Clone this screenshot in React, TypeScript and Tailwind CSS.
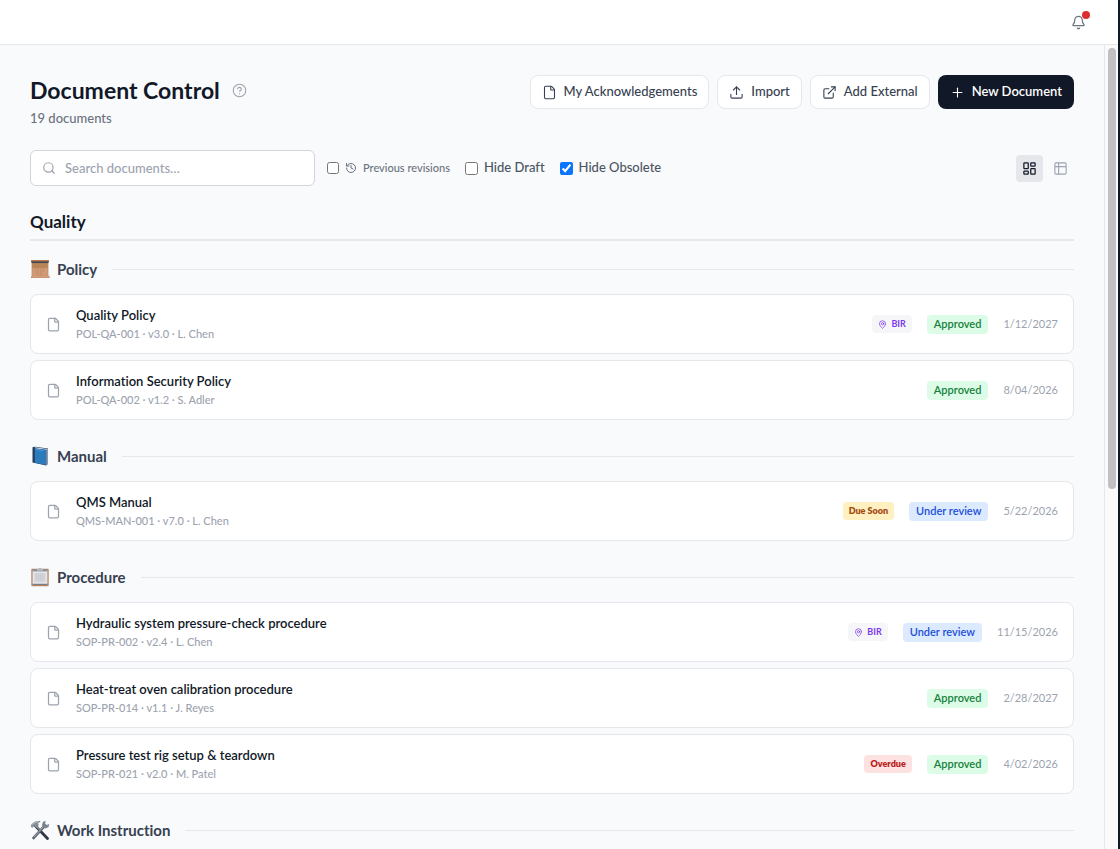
import React, { useState } from 'react';
import {
  Bell,
  CircleHelp,
  ExternalLink,
  File,
  History,
  LayoutDashboard,
  MapPin,
  Plus,
  Search,
  Table2,
  Upload,
} from 'lucide-react';
import clsx from 'clsx';

type Status = 'Approved' | 'Under review';

interface Doc {
  code: string;
  title: string;
  version: string;
  owner: string;
  status: Status;
  date: string;
  site?: string;
  due?: 'Due Soon' | 'Overdue';
}

interface Group {
  name: string;
  icon: React.ReactNode;
  docs: Doc[];
}

const ScrollIcon = () => (
  <svg viewBox="0 0 20 20" className="w-5 h-5" aria-hidden="true">
    <path d="M2 3h16v15H2z" fill="#d19a75" />
    <path d="M2 4h16v5H2z" fill="#b98558" />
    <path d="M1 1h18v2.4H1z" fill="#b97a4c" />
    <path d="M1.500 2.400h17v1.700H1.500z" fill="#3f4756" />
    <path d="M2 4v14M18 4v13" stroke="#c08a66" strokeWidth="0.8" />
    <path d="M5 10h9M5 12h10M5 14h7M7 16h6" stroke="#b57f5c" strokeWidth="0.7" strokeDasharray="1.500 1" />
    <path d="M1 17.500h17.500l1-1.500v3H1z" fill="#c48560" />
    <path d="M2 18h16" stroke="#e0b597" strokeWidth="0.7" />
  </svg>
);

const BookIcon = () => (
  <svg viewBox="0 0 20 20" className="w-5 h-5" aria-hidden="true">
    <path d="M2.500 1.200 5 .8 18 2.600v15.200l-1.800 1.600L2.500 16.500z" fill="#263d5c" />
    <path d="M5 1.300 17.500 3v1L5 2.500z" fill="#c9d9ea" />
    <path d="M4.800 2.300 16.300 4v15L4.800 16.700z" fill="#2b7bbd" />
    <path d="M16.300 4 18 2.800v15l-1.700 1.500z" fill="#8d9bab" />
    <path d="M6 3.400 13 4.400" stroke="#5a9dd6" strokeWidth="1" />
  </svg>
);

const ClipboardIcon = () => (
  <svg viewBox="0 0 20 20" className="w-5 h-5" aria-hidden="true">
    <rect x="1.300" y="1.800" width="17.400" height="17.400" rx="1" fill="#b98663" />
    <path d="M2.600 3.200h14.800v14.600H2.600z" fill="#e4e6ea" />
    <path d="M2.600 2.400h14.800v2H2.600z" fill="#8a909b" />
    <path d="M7 1.800h1.500a1.600 1.600 0 0 1 3 0H13v2H7z" fill="#b5bac2" />
    <rect x="4.500" y="6" width="11" height="9" rx="1" fill="#d0d3d9" />
    <path d="M6 8h8M6 10h8M6 12h8" stroke="#bfc3ca" strokeWidth="0.800" strokeDasharray="1 1" />
    <path d="M2.600 16.800h14.800v1H2.600z" fill="#5f6878" />
  </svg>
);

const ToolsIcon = () => (
  <svg viewBox="0 0 20 20" className="w-5 h-5" aria-hidden="true">
    <path d="M5.500 6 17.500 18.500" stroke="#303744" strokeWidth="2.800" strokeLinecap="round" />
    <path d="M6.500 6.500 10 10" stroke="#8b919b" strokeWidth="1.600" />
    <path d="M.8 6.800 1.500 4 5 1.400 9.500.8 10.500 2 8 3l.8 2.200L6 8 4.300 5.800 2.500 7.800z" fill="#858c97" />
    <path d="M2 4.500 5.500 2.200 8.500 1.700" stroke="#c6cad0" strokeWidth="0.8" fill="none" />
    <path d="M14 6.500 3.500 18" stroke="#5d6572" strokeWidth="2.600" strokeLinecap="round" />
    <path d="M13.500 6.500 4 17" stroke="#b3b8c0" strokeWidth="0.900" />
    <path d="M12 4.800 13 1.700 15.800.8 15 3.300l1.700 1.700 2.600-.9-.8 3-3 1.300-2.700-.8z" fill="#7c8490" />
  </svg>
);

const groups: Group[] = [
  {
    name: 'Policy',
    icon: <ScrollIcon />,
    docs: [
      { code: 'POL-QA-001', title: 'Quality Policy', version: 'v3.0', owner: 'L. Chen', status: 'Approved', date: '1/12/2027', site: 'BIR' },
      { code: 'POL-QA-002', title: 'Information Security Policy', version: 'v1.2', owner: 'S. Adler', status: 'Approved', date: '8/04/2026' },
    ],
  },
  {
    name: 'Manual',
    icon: <BookIcon />,
    docs: [
      { code: 'QMS-MAN-001', title: 'QMS Manual', version: 'v7.0', owner: 'L. Chen', status: 'Under review', date: '5/22/2026', due: 'Due Soon' },
    ],
  },
  {
    name: 'Procedure',
    icon: <ClipboardIcon />,
    docs: [
      { code: 'SOP-PR-002', title: 'Hydraulic system pressure-check procedure', version: 'v2.4', owner: 'L. Chen', status: 'Under review', date: '11/15/2026', site: 'BIR' },
      { code: 'SOP-PR-014', title: 'Heat-treat oven calibration procedure', version: 'v1.1', owner: 'J. Reyes', status: 'Approved', date: '2/28/2027' },
      { code: 'SOP-PR-021', title: 'Pressure test rig setup & teardown', version: 'v2.0', owner: 'M. Patel', status: 'Approved', date: '4/02/2026', due: 'Overdue' },
    ],
  },
  { name: 'Work Instruction', icon: <ToolsIcon />, docs: [] },
];

const statusStyles: Record<Status, string> = {
  Approved: 'bg-[#dcfce7] text-[#15803d]',
  'Under review': 'bg-[#dbeafe] text-[#1d4ed8]',
};

const dueStyles = {
  'Due Soon': 'bg-[#fef0c0] text-[#a34a12]',
  Overdue: 'bg-[#fee2e2] text-[#b91c1c]',
};

const DocumentCard: React.FC<{ doc: Doc }> = ({ doc }) => (
  <li className="flex items-center h-[60px] px-[15px] bg-white border border-[#e5e7eb] rounded-lg">
    <File className="w-[15px] h-[15px] shrink-0 text-[#9ca3af]" strokeWidth={2} />
    <div className="ml-[15px] flex-1 min-w-0">
      <h4 className="text-[13px] leading-5 font-semibold text-[#111827] truncate">{doc.title}</h4>
      <p className="text-[11px] leading-[18px] font-medium text-[#9ca3af] truncate">
        {doc.code} · {doc.version} · {doc.owner}
      </p>
    </div>
    <div className="flex items-center gap-[15px] shrink-0">
      {doc.site && (
        <span className="flex items-center gap-1 h-[18px] px-[6px] rounded bg-[#f6f6f9] text-[9px] font-bold text-[#7c3aed]">
          <MapPin className="w-[9px] h-[9px]" strokeWidth={2} />
          {doc.site}
        </span>
      )}
      {doc.due && (
        <span className={clsx('flex items-center h-[18px] px-[6px] rounded text-[9px] font-extrabold', dueStyles[doc.due])}>
          {doc.due}
        </span>
      )}
      <span className={clsx('flex items-center h-[19px] px-[7px] rounded text-[11px] font-semibold', statusStyles[doc.status])}>
        {doc.status}
      </span>
      <time className="text-[11px] text-[#9ca3af]">{doc.date}</time>
    </div>
  </li>
);

const GroupSection: React.FC<{ group: Group }> = ({ group }) => (
  <section>
    <div className="flex items-center h-6 mb-[13px]">
      {group.icon}
      <h3 className="ml-[7px] mr-[15px] text-[15px] leading-6 font-bold text-[#374151]">{group.name}</h3>
      <div className="flex-1 h-px bg-[#e5e7eb]" />
    </div>
    <ul className="space-y-[6px]">
      {group.docs.map((doc) => (
        <DocumentCard key={doc.code} doc={doc} />
      ))}
    </ul>
  </section>
);

const outlineButton =
  'flex items-center gap-[7px] h-[34px] px-[11px] bg-white border border-[#e5e7eb] rounded-lg text-[13px] font-medium text-[#374151] hover:bg-gray-50';

export default function App() {
  const [hideDraft, setHideDraft] = useState(false);
  const [hideObsolete, setHideObsolete] = useState(true);
  const [previous, setPrevious] = useState(false);
  const [view, setView] = useState<'cards' | 'table'>('cards');

  return (
    <div className="h-screen flex bg-[#f9fafb] font-['Lato',sans-serif] [font-variant-ligatures:none] text-[#111827]">
      <div className="flex-1 min-w-0 flex flex-col">
        {/* Top bar */}
        <header className="h-[45px] shrink-0 flex items-center justify-end pr-[32px] bg-white border-b border-[#e5e7eb]">
          <button className="relative" aria-label="Notifications">
            <Bell className="w-[15px] h-[15px] text-[#6b7280]" strokeWidth={2} />
            <span className="absolute -top-[4px] -right-[4px] w-[8px] h-[8px] rounded-full bg-[#dc2f2f]" />
          </button>
        </header>

        <div className="flex-1 min-h-0 flex">
          <main className="flex-1 min-w-0 overflow-hidden px-[30px] pt-[30px]">
            {/* Page title and actions */}
            <div className="flex items-start justify-between">
              <div>
                <div className="flex items-center gap-3 h-[30px]">
                  <h1 className="text-[23px] leading-[30px] font-bold">Document Control</h1>
                  <button aria-label="Help">
                    <CircleHelp className="w-[15px] h-[15px] text-[#9ca3af]" strokeWidth={1.75} />
                  </button>
                </div>
                <p className="mt-[3px] text-[13px] leading-5 font-medium text-[#6b7280]">19 documents</p>
              </div>
              <div className="flex items-center gap-2">
                <button className={outlineButton}>
                  <File className="w-[15px] h-[15px]" strokeWidth={1.75} />
                  My Acknowledgements
                </button>
                <button className={outlineButton}>
                  <Upload className="w-[15px] h-[15px]" strokeWidth={1.75} />
                  Import
                </button>
                <button className={outlineButton}>
                  <ExternalLink className="w-[15px] h-[15px]" strokeWidth={1.75} />
                  Add External
                </button>
                <button className="flex items-center gap-[7px] h-[34px] px-3 rounded-lg bg-[#111827] text-[13px] font-semibold text-white">
                  <Plus className="w-[15px] h-[15px]" strokeWidth={1.75} />
                  New Document
                </button>
              </div>
            </div>

            {/* Filters */}
            <div className="mt-[22px] flex items-center">
              <div className="relative w-[285px]">
                <Search className="absolute left-3 top-[11px] w-[14px] h-[14px] text-[#9ca3af]" strokeWidth={2} />
                <input
                  type="text"
                  aria-label="Search documents"
                  placeholder="Search documents…"
                  className="block w-full h-9 pl-[34px] pr-3 bg-white border border-[#d1d5db] rounded-md text-[13px] font-medium placeholder:text-[#9ca3af]"
                />
              </div>
              <label className="ml-3 flex items-center gap-[6px] text-[11px] font-medium text-[#6b7280]">
                <input type="checkbox" className="w-3 h-3" checked={previous} onChange={(e) => setPrevious(e.target.checked)} />
                <History className="w-3 h-3" strokeWidth={2} />
                Previous revisions
              </label>
              <label className="ml-[15px] flex items-center gap-[6px] text-[13px] font-medium text-[#4b5563]">
                <input type="checkbox" className="w-[13px] h-[13px]" checked={hideDraft} onChange={(e) => setHideDraft(e.target.checked)} />
                Hide Draft
              </label>
              <label className="ml-[15px] flex items-center gap-[6px] text-[13px] font-medium text-[#4b5563]">
                <input
                  type="checkbox"
                  className="w-[13px] h-[13px] accent-[#0a75ff]"
                  checked={hideObsolete}
                  onChange={(e) => setHideObsolete(e.target.checked)}
                />
                Hide Obsolete
              </label>
              <div className="ml-auto flex items-center gap-1">
                <button
                  aria-label="Card view"
                  onClick={() => setView('cards')}
                  className={clsx('p-[6px] rounded', view === 'cards' ? 'bg-[#e5e7eb] text-[#111827]' : 'text-[#9ca3af]')}
                >
                  <LayoutDashboard className="w-[15px] h-[15px]" strokeWidth={2} />
                </button>
                <button
                  aria-label="Table view"
                  onClick={() => setView('table')}
                  className={clsx('p-[6px] rounded', view === 'table' ? 'bg-[#e5e7eb] text-[#111827]' : 'text-[#9ca3af]')}
                >
                  <Table2 className="w-[15px] h-[15px]" strokeWidth={1.75} />
                </button>
              </div>
            </div>

            {/* Document groups */}
            <h2 className="mt-[23px] mb-4 h-8 border-b-2 border-[#e5e7eb] text-[17px] leading-[26px] font-bold">Quality</h2>
            <div className="space-y-6">
              {groups.map((group) => (
                <GroupSection key={group.name} group={group} />
              ))}
            </div>
          </main>

          {/* Scroll track */}
          <div className="w-[14px] shrink-0 border-l border-[#e5e7eb] bg-[#fafafa] pt-[3px] px-[2px]">
            <div className="mx-auto w-[8px] h-[55%] rounded-full bg-[#c1c1c3]" />
          </div>
        </div>
      </div>
      <div className="w-[2px] shrink-0 bg-[#111827]" />
    </div>
  );
}
